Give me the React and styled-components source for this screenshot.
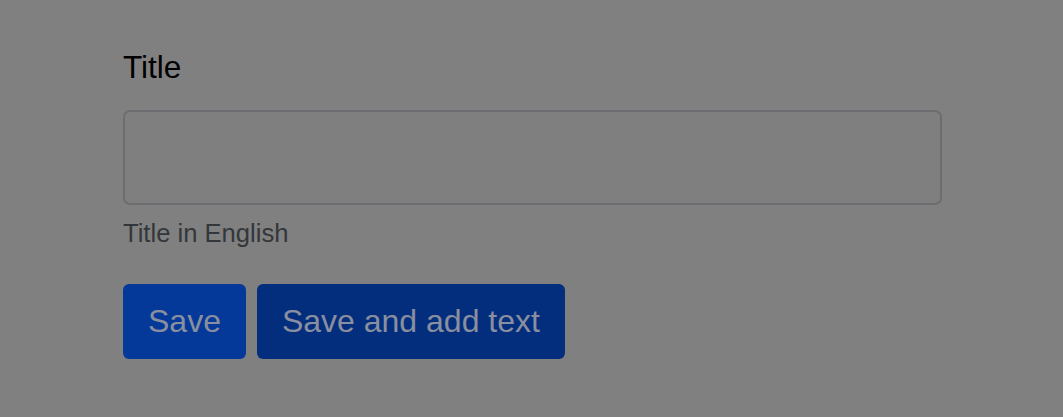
import React from "react"
import styled, { createGlobalStyle } from "styled-components"

const GlobalStyle = createGlobalStyle`
  html, body {
    margin: 0;
    padding: 0;
    background: #808080;
  }
  body {
    font-family: "Liberation Sans", Arial, sans-serif;
  }
`

const Page = styled.div`
  min-height: 417px;
  background: #808080;
  padding: 48px 121px 0 123px;
  box-sizing: border-box;
`

const Form = styled.form`
  display: flex;
  flex-direction: column;
  width: 819px;
`

const Label = styled.label`
  font-size: 31.5px;
  line-height: 38px;
  color: #000;
  margin-bottom: 24px;
`

const Input = styled.input`
  height: 95px;
  box-sizing: border-box;
  background: #7f7f7f;
  border: 2px solid #6b6d70;
  border-radius: 7px;
  font-size: 24px;
  padding: 0 18px;
  outline: none;
`

const Help = styled.small`
  font-size: 25.6px;
  line-height: 30px;
  color: #33373b;
  margin-top: 13px;
`

const Actions = styled.div`
  display: flex;
  gap: 11px;
  margin-top: 36px;
`

const Button = styled.button`
  height: 75px;
  padding: 0 25px;
  border: none;
  border-radius: 6px;
  background: ${({ $variant }) => ($variant === "dark" ? "#032e7e" : "#04399a")};
  color: #8a8f9f;
  font-family: "Liberation Sans", Arial, sans-serif;
  font-size: 32px;
  cursor: pointer;
`

export default function App() {
  return (
    <>
      <GlobalStyle />
      <Page>
        <Form onSubmit={e => e.preventDefault()}>
          <Label htmlFor="title">Title</Label>
          <Input id="title" type="text" />
          <Help>Title in English</Help>
          <Actions>
            <Button type="submit">Save</Button>
            <Button type="button" $variant="dark">Save and add text</Button>
          </Actions>
        </Form>
      </Page>
    </>
  )
}
